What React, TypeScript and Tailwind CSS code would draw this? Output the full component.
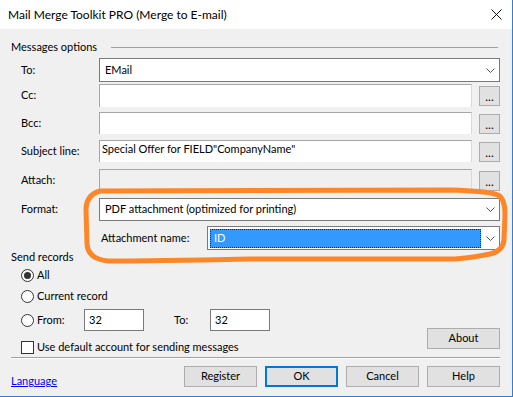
import React from "react";

// 下拉框的小箭头
function Chevron() {
  return (
    <svg width="9" height="5" viewBox="0 0 9 5" className="block">
      <path d="M0.5 0.5 L4.5 4.5 L8.5 0.5" fill="none" stroke="#555" strokeWidth="1" />
    </svg>
  );
}

function Combo({ value, className }: { value: string; className?: string }) {
  return (
    <div className={`flex items-center bg-white border border-[#7a7a7a] ${className ?? ""}`}>
      <span className="flex-1 pl-[5px] whitespace-nowrap">{value}</span>
      <span className="w-[18px] flex justify-center">
        <Chevron />
      </span>
    </div>
  );
}

function DotsButton({ className }: { className?: string }) {
  return (
    <div
      className={`w-[21px] h-[20px] ml-[7px] bg-[#e1e1e1] border border-[#adadad] flex items-end justify-center pb-[2px] leading-none text-[12px] ${className ?? ""}`}
    >
      ...
    </div>
  );
}

function TextRow({
  label,
  value,
  disabled,
  h,
  mt,
}: {
  label: string;
  value?: string;
  disabled?: boolean;
  h: string;
  mt: string;
}) {
  return (
    <div className={`flex items-stretch ${h} ${mt}`}>
      <div className="w-[88px] pl-[10px] flex items-center">{label}</div>
      <div
        className={`flex-1 border-t border-l border-t-[#a6a6a6] border-l-[#a6a6a6] border-r border-r-[#d9d9d9] ${
          disabled ? "bg-[#f0f0f0]" : "bg-white"
        } pl-[2px] leading-[15px] whitespace-nowrap`}
      >
        {value}
      </div>
      <DotsButton className="mt-[2px]" />
    </div>
  );
}

function Radio({ checked, label }: { checked?: boolean; label: string }) {
  return (
    <div className="flex items-center">
      <span className="w-[13px] h-[13px] rounded-full border border-[#333] bg-white flex items-center justify-center">
        {checked && <span className="w-[7px] h-[7px] rounded-full bg-[#333]" />}
      </span>
      <span className="ml-[3px]">{label}</span>
    </div>
  );
}

function Btn({ label, primary }: { label: string; primary?: boolean }) {
  return (
    <div
      className={`w-[73px] h-[21px] bg-[#e1e1e1] flex items-center justify-center ${
        primary ? "border-2 border-[#0078d7]" : "border border-[#adadad]"
      }`}
    >
      {label}
    </div>
  );
}

export default function App() {
  return (
    <div className="w-[513px] h-[397px] relative bg-[#f0f0f0] border-r border-b border-[#2d7fd8] font-['Lato',sans-serif] text-[11px] text-black overflow-hidden">
      {/* 标题栏 */}
      <div className="h-[29px] bg-white flex items-center justify-between pl-[8px] pr-[10px] text-[12px]">
        <span>Mail Merge Toolkit PRO (Merge to E-mail)</span>
        <svg width="11" height="11" viewBox="0 0 11 11">
          <path d="M0.5 0.5 L10.5 10.5 M10.5 0.5 L0.5 10.5" stroke="#111" strokeWidth="1" />
        </svg>
      </div>

      <div className="pl-[11px] pr-[12px]">
        {/* Messages options */}
        <div className="mt-[10px] h-[16px] flex items-center">
          <span>Messages options</span>
          <div className="flex-1 ml-[14px] mr-[2px] h-px bg-[#a0a0a0]" />
        </div>

        <div className="flex items-stretch h-[24px] mt-[3px]">
          <div className="w-[88px] pl-[10px] flex items-center">To:</div>
          <Combo value="EMail" className="flex-1" />
        </div>

        <TextRow label="Cc:" h="h-[23px]" mt="mt-[2px]" />
        <TextRow label="Bcc:" h="h-[22px]" mt="mt-[5px]" />
        <TextRow
          label="Subject line:"
          value={'Special Offer for FIELD"CompanyName"'}
          h="h-[22px]"
          mt="mt-[6px]"
        />
        <TextRow label="Attach:" disabled h="h-[22px]" mt="mt-[7px]" />

        <div className="flex items-stretch h-[23px] mt-[7px]">
          <div className="w-[88px] pl-[10px] flex items-center">Format:</div>
          <Combo value="PDF attachment (optimized for printing)" className="flex-1" />
        </div>

        <div className="flex items-stretch h-[24px] mt-[5px]">
          <div className="w-[196px] pl-[90px] flex items-center">Attachment name:</div>
          <div className="flex-1 flex items-center bg-white border border-[#7a7a7a] pl-[2px]">
            <div className="flex-1 h-[19px] bg-[#3399ff] border border-dotted border-[#222] text-white pl-[3px] flex items-center">
              ID
            </div>
            <span className="w-[18px] flex justify-center">
              <Chevron />
            </span>
          </div>
        </div>

        {/* Send records */}
        <div className="h-[15px] flex items-center">Send records</div>

        <div className="flex">
          <div className="flex-1 pl-[10px]">
            <div className="h-[16px] mt-[2px] flex items-center">
              <Radio checked label="All" />
            </div>
            <div className="h-[16px] mt-[5px] flex items-center">
              <Radio label="Current record" />
            </div>
            <div className="h-[22px] mt-[5px] flex items-center">
              <div className="w-[63px]">
                <Radio label="From:" />
              </div>
              <div className="w-[60px] h-[22px] bg-white border border-[#7a7a7a] pl-[4px] flex items-center">
                32
              </div>
              <span className="ml-[30px] w-[36px]">To:</span>
              <div className="w-[60px] h-[22px] bg-white border border-[#7a7a7a] pl-[4px] flex items-center">
                32
              </div>
            </div>
            <div className="h-[16px] mt-[8px] flex items-center">
              <span className="w-[13px] h-[13px] border border-[#333] bg-white" />
              <span className="ml-[3px]">Use default account for sending messages</span>
            </div>
          </div>
          <div className="self-end mb-[6px]">
            <Btn label="About" />
          </div>
        </div>

        <div className="mt-[2px] h-px bg-[#a0a0a0]" />
        <div className="h-px bg-white" />

        <div className="mt-[7px] flex items-start">
          <span className="mt-[7px] text-[#0000ff] underline">Language</span>
          <div className="ml-auto flex gap-[8px]">
            <Btn label="Register" />
            <Btn label="OK" primary />
            <Btn label="Cancel" />
            <Btn label="Help" />
          </div>
        </div>
      </div>

      {/* 手画的橙色圈 */}
      <svg
        className="absolute inset-0 pointer-events-none"
        width="513"
        height="397"
        viewBox="0 0 513 397"
      >
        <path
          d="M100 191 L450 190 Q488 191 498 195 Q505 199 505 214 L504 240 Q503 251 490 254 Q470 258 455 259 L250 259 Q150 261 108 261 Q88 259 87 244 L86 210 Q86 195 100 191 Z"
          fill="none"
          stroke="#fd8628"
          strokeWidth="5"
          strokeLinejoin="round"
        />
      </svg>
    </div>
  );
}
